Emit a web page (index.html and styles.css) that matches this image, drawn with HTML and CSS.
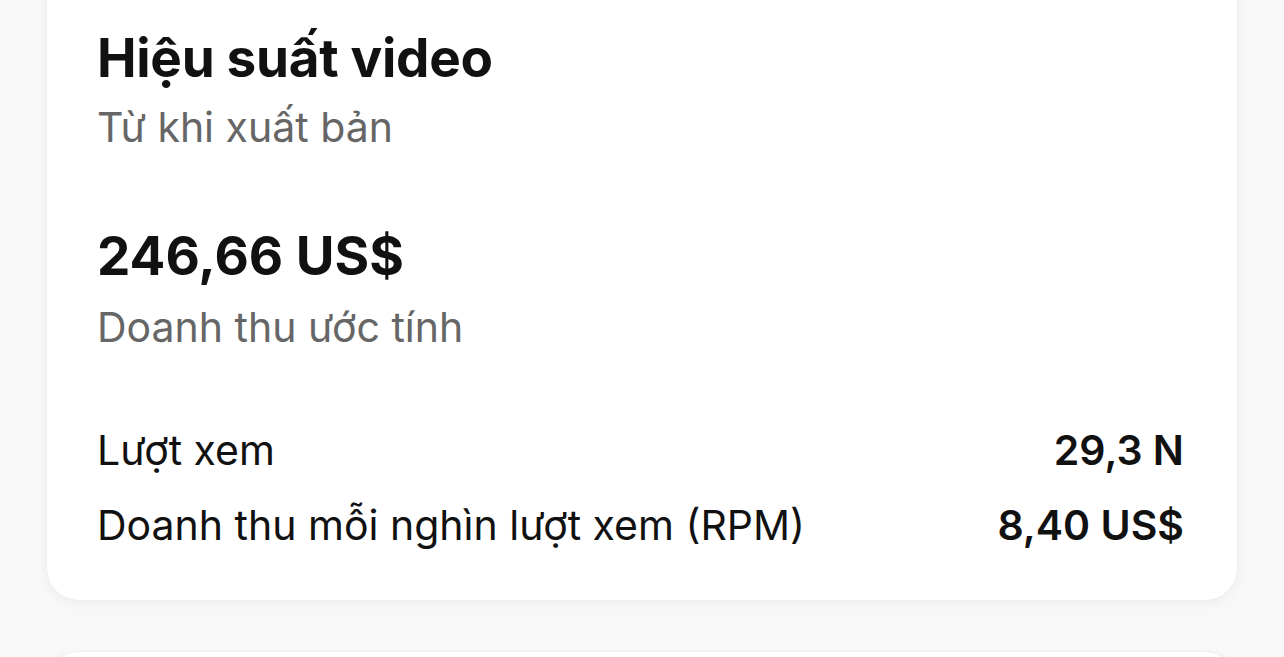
FILE: index.html
```html
<!DOCTYPE html>
<html lang="vi">
<head>
<meta charset="utf-8">
<link rel="stylesheet" href="styles.css">
</head>
<body>
<main class="page">
  <section class="card">
    <h1 class="title">Hiệu suất video</h1>
    <p class="sub">Từ khi xuất bản</p>
    <div class="amount">246,66 US$</div>
    <p class="sub label">Doanh thu ước tính</p>
    <div class="rows">
      <div class="row"><span>Lượt xem</span><span class="val">29,3 N</span></div>
      <div class="row"><span>Doanh thu mỗi nghìn lượt xem (RPM)</span><span class="val">8,40 US$</span></div>
    </div>
  </section>
  <section class="card next"></section>
</main>
</body>
</html>
```
FILE: styles.css
```css
html, body {
  margin: 0;
  padding: 0;
  background: #f8f8f8;
  height: 100%;
  overflow: hidden;
}
body {
  font-family: Inter, "Noto Sans", sans-serif;
  color: #111;
}
.page {
  display: flex;
  flex-direction: column;
  gap: 52px;
  padding: 0 47px;
}
.card {
  background: #fff;
  border-radius: 32px;
  box-shadow: 0 0 0 1px #efefef, 0 3px 12px rgba(0,0,0,0.05);
  margin-top: -40px;
  padding: 68px 53px 45px 50px;
}
.card.next {
  margin-top: 0;
  height: 200px;
  padding: 0;
}
.title {
  margin: 0;
  font-size: 53px;
  font-weight: 700;
  line-height: 60px;
  letter-spacing: -0.3px;
}
.sub {
  margin: 9px 0 0;
  font-size: 41px;
  line-height: 60px;
  color: #666;
  font-weight: 400;
}
.amount {
  margin-top: 69px;
  font-size: 53px;
  font-weight: 700;
  line-height: 60px;
}
.sub.label {
  margin-top: 11px;
}
.rows {
  margin-top: 63px;
  display: flex;
  flex-direction: column;
  gap: 15px;
}
.row {
  display: flex;
  justify-content: space-between;
  font-size: 41px;
  line-height: 60px;
}
.val {
  font-weight: 600;
}
```
